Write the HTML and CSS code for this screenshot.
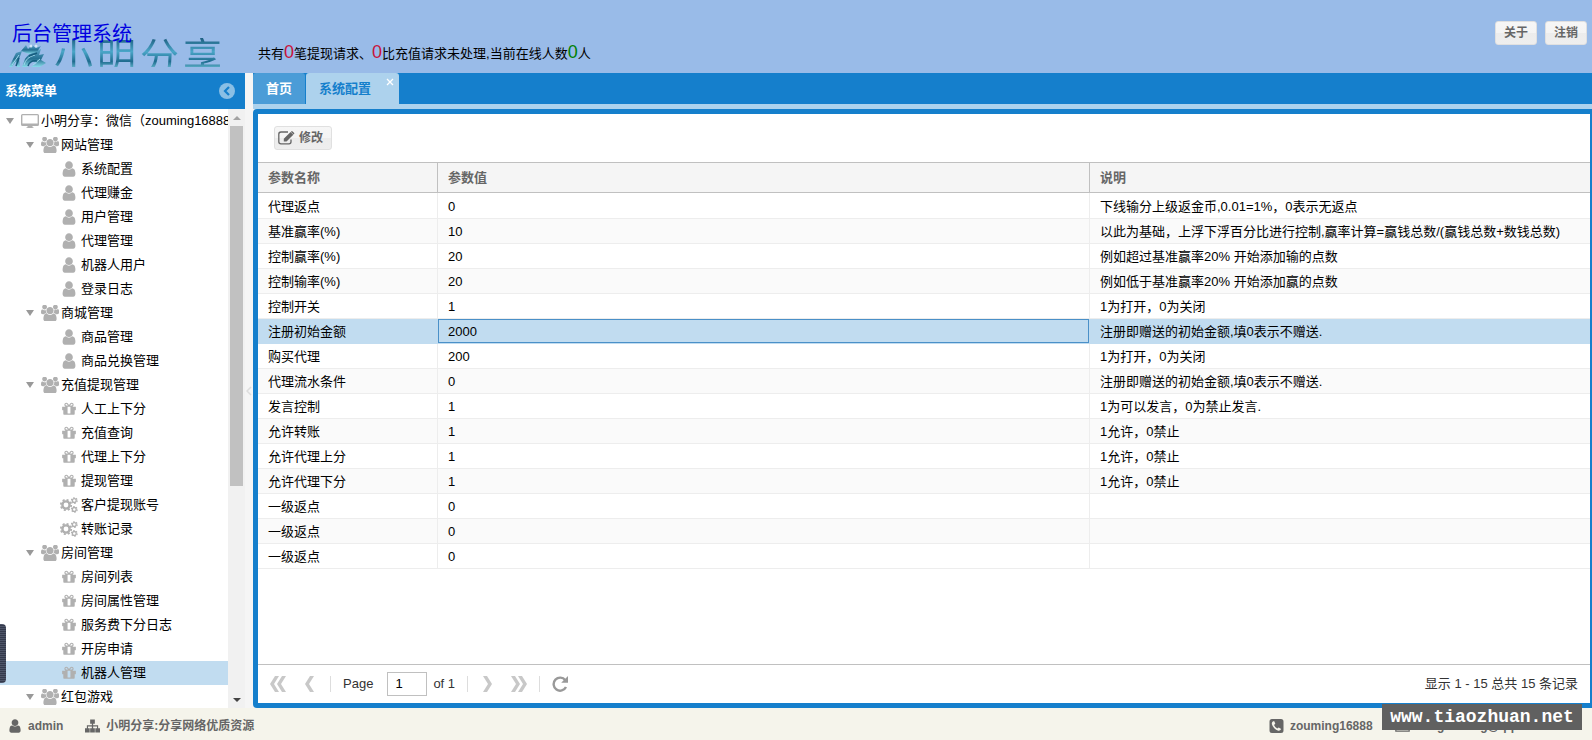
FILE: index.html
```html
<!DOCTYPE html>
<html lang="zh-CN">
<head>
<meta charset="utf-8">
<title>后台管理系统</title>
<link rel="stylesheet" href="styles.css">
</head>
<body>
<svg class="defs" aria-hidden="true">
  <symbol id="i-user" viewBox="96 96 1600 1600"><path d="M1536 1399q0 109-62.500 187t-150.500 78h-854q-88 0-150.500-78t-62.500-187q0-85 8.500-160.500t31.500-152 58.500-131 94-89 134.500-34.500q131 128 313 128t313-128q76 0 134.500 34.500t94 89 58.500 131 31.500 152 8.500 160.500zm-256-887q0 159-112.500 271.500t-271.500 112.500-271.500-112.500-112.500-271.500 112.500-271.500 271.500-112.500 271.500 112.500 112.500 271.500z"/></symbol>
  <symbol id="i-users" viewBox="0 64 1920 1664"><path d="M593 896q-162 5-265 128h-134q-82 0-138-40.500t-56-118.500q0-353 124-353 6 0 43.500 21t97.500 42.500 119 21.500q67 0 133-23-5 37-5 66 0 159 93 294zm1071 637q0 120-73 189.500t-194 69.500h-874q-121 0-194-69.500t-73-189.500q0-53 3.500-103.500t14-109 26.500-108.500 43-97.500 62-81 85.500-53.500 111.500-20q10 0 43 21.500t73 48 107 48 135 21.500 135-21.500 107-48 73-48 43-21.500q61 0 111.500 20t85.500 53.500 62 81 43 97.500 26.500 108.500 14 109 3.500 103.500zm-1024-1277q0 106-75 181t-181 75-181-75-75-181 75-181 181-75 181 75 75 181zm704 384q0 159-112.500 271.500t-271.500 112.500-271.500-112.500-112.500-271.500 112.500-271.500 271.500-112.500 271.500 112.500 112.500 271.500zm576 225q0 78-56 118.500t-138 40.500h-134q-103-123-265-128 93-135 93-294 0-29-5-66 66 23 133 23 59 0 119-21.500t97.500-42.500 43.500-21q124 0 124 353zm-128-609q0 106-75 181t-181 75-181-75-75-181 75-181 181-75 181 75 75 181z"/></symbol>
  <symbol id="i-gift" viewBox="0 0 1792 1792"><path d="M1056 1356v-716h-320v716q0 25 18 38.500t46 13.500h192q28 0 46-13.500t18-38.500zm-456-844h195l-126-161q-26-31-69-31-40 0-68 28t-28 68 28 68 68 28zm688-96q0-40-28-68t-68-28q-43 0-69 31l-125 161h194q40 0 68-28t28-68zm376 256v320q0 14-9 23t-23 9h-96v416q0 40-28 68t-68 28h-1088q-40 0-68-28t-28-68v-416h-96q-14 0-23-9t-9-23v-320q0-14 9-23t23-9h440q-93 0-158.500-65.500t-65.500-158.500 65.500-158.500 158.500-65.500q107 0 168 77l128 165 128-165q61-77 168-77 93 0 158.500 65.500t65.500 158.500-65.500 158.500-158.500 65.500h440q14 0 23 9t9 23z"/></symbol>
  <symbol id="i-cogs" viewBox="0 0 18 16"><g fill="none" stroke="currentColor"><circle cx="6" cy="8" r="3.600" stroke-width="2.400"/><circle cx="6" cy="8" r="5.200" stroke-width="1.800" stroke-dasharray="2.040 2.040"/><circle cx="14.300" cy="3.600" r="1.900" stroke-width="1.300"/><circle cx="14.300" cy="3.600" r="2.900" stroke-width="1.100" stroke-dasharray="1.520 1.520"/><circle cx="14.300" cy="12.400" r="1.900" stroke-width="1.300"/><circle cx="14.300" cy="12.400" r="2.900" stroke-width="1.100" stroke-dasharray="1.520 1.520"/></g></symbol>
  <symbol id="i-desktop" viewBox="0 0 18 16"><path fill-rule="evenodd" d="M1.500 1h15Q18 1 18 2.500v9q0 1.500-1.500 1.500H11.500v1.200h1V15h-7v-.8h1V13h-5Q0 13 0 11.500v-9Q0 1 1.500 1zM1.400 2.300v8.200h15.200V2.300z"/></symbol>
  <symbol id="i-sitemap" viewBox="0 0 16 14"><path d="M5.500 0h5v4.500H8.700v1.800H14v3.200h2V14h-5V9.500h1.800v-2H8.700v2h1.800V14h-5V9.500h1.800v-2H3.200v2H5V14H0V9.500h2V6.300h5.300V4.500H5.500z"/></symbol>
  <symbol id="i-phone" viewBox="0 0 14 14"><path fill-rule="evenodd" d="M2.500 0h9Q14 0 14 2.500v9q0 2.500-2.500 2.500h-9Q0 14 0 11.500v-9Q0 0 2.500 0zM3.600 2.300Q2 3.500 2.400 5.300q1.500 4.900 6.400 6.500 2 .2 2.900-1.700L9.200 8.400l-1.400 1.200Q5.500 8.500 4.500 6.100l1.300-1.300-1-2.600z"/></symbol>
  <symbol id="i-edit" viewBox="0 0 17 14"><path d="M13 8.500v2.300q0 2-2 2H3q-2.200 0-2.200-2V3.200Q.8 1 3 1h7" fill="none" stroke="currentColor" stroke-width="1.300"/><path d="M5.800 10.500V7.800L12.600 1l2.700 2.700-6.800 6.800zM13.300.4q.6-.6 1.300 0l1.400 1.400q.6.600 0 1.300l-.4.400L12.900.8z"/></symbol>
  <symbol id="i-prev" viewBox="0 0 9 16"><path d="M5 0h4L4 8l5 8H5L0 8z"/></symbol>
  <symbol id="i-next" viewBox="0 0 9 16"><path d="M0 0h4l5 8-5 8H0l5-8z"/></symbol>
  <symbol id="i-refresh" viewBox="0 0 16 16"><path d="M13.300 4.200A6.500 6.500 0 1 0 14 11" fill="none" stroke="currentColor" stroke-width="2.400"/><path d="M16 0v6.800H9.200z"/></symbol>
  <symbol id="i-mail" viewBox="0 0 18 14"><path d="M1 1h16v12H1zM1 3l8 6 8-6" fill="none" stroke="currentColor" stroke-width="1.500"/></symbol>
</svg>

<header class="header">
  <div class="brand">
    <svg class="emblem" viewBox="0 0 38 30" aria-hidden="true">
      <defs><linearGradient id="teal" x1="0" y1="0" x2="0" y2="1"><stop offset="0" stop-color="#5ba5ca"/><stop offset=".55" stop-color="#236f91"/><stop offset="1" stop-color="#89dceb"/></linearGradient></defs>
      <path fill="url(#teal)" d="M0 29 7 15l6-2-3 8 1 8H8l-1-6-4 6zM13 29l3-8q3-5 9-7l7-3-2 6 5-1-3 6 5 3-6 4H22l6-4-6-2-4 6z"/>
      <path fill="url(#teal)" d="m12 13 5-6 2 4 4-4 4 3 5-2-4 6-8 2z"/>
      <path fill="none" stroke="#9dd8ec" d="m3 27 7-10M15 27q2-8 11-10M24 27l7-6"/>
      <path fill="none" stroke="#165c7e" stroke-width="1.500" d="m7 28 3-8M19 28q2-6 9-5M28 15l-8 3"/>
      <circle cx="22" cy="8" r="1.500" fill="#d5e8f7"/><circle cx="27" cy="8" r="1.500" fill="#d5e8f7"/>
    </svg>
    <div class="wordmark"><span>小</span><span>明</span><span>分</span><span>享</span></div>
    <h1 class="title">后台管理系统</h1>
  </div>
  <p class="status">共有<b class="num red">0</b>笔提现请求、<b class="num red">0</b>比充值请求未处理,当前在线人数<b class="num green">0</b>人</p>
  <div class="actions"><button class="btn">关于</button><button class="btn">注销</button></div>
</header>

<div class="workspace">
  <aside class="sidebar">
    <div class="side-head"><h2>系统菜单</h2>
      <button class="collapse" aria-label="收起"><svg viewBox="0 0 16 16"><circle cx="8" cy="8" r="8" fill="#8abfe5"/><path d="M10 4 6 8l4 4" fill="none" stroke="#157fcc" stroke-width="2.200"/></svg></button></div>
    <div class="side-body">
      <ul class="tree">
        <li class="l0"><i class="caret"></i><svg><use href="#i-desktop"/></svg>小明分享：微信（zouming16888）</li>
        <li class="l1"><i class="caret"></i><svg><use href="#i-users"/></svg>网站管理</li>
        <li class="l2"><svg><use href="#i-user"/></svg>系统配置</li>
        <li class="l2"><svg><use href="#i-user"/></svg>代理赚金</li>
        <li class="l2"><svg><use href="#i-user"/></svg>用户管理</li>
        <li class="l2"><svg><use href="#i-user"/></svg>代理管理</li>
        <li class="l2"><svg><use href="#i-user"/></svg>机器人用户</li>
        <li class="l2"><svg><use href="#i-user"/></svg>登录日志</li>
        <li class="l1"><i class="caret"></i><svg><use href="#i-users"/></svg>商城管理</li>
        <li class="l2"><svg><use href="#i-user"/></svg>商品管理</li>
        <li class="l2"><svg><use href="#i-user"/></svg>商品兑换管理</li>
        <li class="l1"><i class="caret"></i><svg><use href="#i-users"/></svg>充值提现管理</li>
        <li class="l2"><svg><use href="#i-gift"/></svg>人工上下分</li>
        <li class="l2"><svg><use href="#i-gift"/></svg>充值查询</li>
        <li class="l2"><svg><use href="#i-gift"/></svg>代理上下分</li>
        <li class="l2"><svg><use href="#i-gift"/></svg>提现管理</li>
        <li class="l2"><svg><use href="#i-cogs"/></svg>客户提现账号</li>
        <li class="l2"><svg><use href="#i-cogs"/></svg>转账记录</li>
        <li class="l1"><i class="caret"></i><svg><use href="#i-users"/></svg>房间管理</li>
        <li class="l2"><svg><use href="#i-gift"/></svg>房间列表</li>
        <li class="l2"><svg><use href="#i-gift"/></svg>房间属性管理</li>
        <li class="l2"><svg><use href="#i-gift"/></svg>服务费下分日志</li>
        <li class="l2"><svg><use href="#i-gift"/></svg>开房申请</li>
        <li class="l2 selected"><svg><use href="#i-gift"/></svg>机器人管理</li>
        <li class="l1"><i class="caret"></i><svg><use href="#i-users"/></svg>红包游戏</li>
      </ul>
      <div class="scroll"><i class="up"></i><div class="track"><div class="thumb"></div></div><i class="down"></i></div>
    </div>
  </aside>
  <div class="splitter"><svg viewBox="0 0 6 10"><path d="M5 1 1 5l4 4" fill="none" stroke="#ddd" stroke-width="1.500"/></svg></div>
  <main class="main">
    <nav class="tabs"><button class="tab">首页</button><button class="tab active">系统配置<svg class="close" viewBox="0 0 8 8"><path d="m1 1 6 6M7 1 1 7" stroke="#fff" stroke-width="1.300"/></svg></button></nav>
    <section class="panel">
      <div class="toolbar"><button class="btn edit"><svg><use href="#i-edit"/></svg>修改</button></div>
      <div class="grid">
        <table>
          <colgroup><col class="c1"><col class="c2"><col></colgroup>
          <thead><tr><th>参数名称</th><th>参数值</th><th>说明</th></tr></thead>
          <tbody>
            <tr><td>代理返点</td><td>0</td><td>下线输分上级返金币,0.01=1%，0表示无返点</td></tr>
            <tr><td>基准赢率(%)</td><td>10</td><td>以此为基础，上浮下浮百分比进行控制,赢率计算=赢钱总数/(赢钱总数+数钱总数)</td></tr>
            <tr><td>控制赢率(%)</td><td>20</td><td>例如超过基准赢率20% 开始添加输的点数</td></tr>
            <tr><td>控制输率(%)</td><td>20</td><td>例如低于基准赢率20% 开始添加赢的点数</td></tr>
            <tr><td>控制开关</td><td>1</td><td>1为打开，0为关闭</td></tr>
            <tr class="selected"><td>注册初始金额</td><td class="focus">2000</td><td>注册即赠送的初始金额,填0表示不赠送.</td></tr>
            <tr><td>购买代理</td><td>200</td><td>1为打开，0为关闭</td></tr>
            <tr><td>代理流水条件</td><td>0</td><td>注册即赠送的初始金额,填0表示不赠送.</td></tr>
            <tr><td>发言控制</td><td>1</td><td>1为可以发言，0为禁止发言.</td></tr>
            <tr><td>允许转账</td><td>1</td><td>1允许，0禁止</td></tr>
            <tr><td>允许代理上分</td><td>1</td><td>1允许，0禁止</td></tr>
            <tr><td>允许代理下分</td><td>1</td><td>1允许，0禁止</td></tr>
            <tr><td>一级返点</td><td>0</td><td></td></tr>
            <tr><td>一级返点</td><td>0</td><td></td></tr>
            <tr><td>一级返点</td><td>0</td><td></td></tr>
          </tbody>
        </table>
      </div>
      <div class="pager">
        <button class="nav double" aria-label="首页"><svg><use href="#i-prev"/></svg><svg><use href="#i-prev"/></svg></button>
        <button class="nav" aria-label="上一页"><svg><use href="#i-prev"/></svg></button>
        <i class="sep"></i>
        <label for="page">Page</label><input id="page" type="text" value="1"><span>of 1</span>
        <i class="sep"></i>
        <button class="nav" aria-label="下一页"><svg><use href="#i-next"/></svg></button>
        <button class="nav double" aria-label="末页"><svg><use href="#i-next"/></svg><svg><use href="#i-next"/></svg></button>
        <i class="sep"></i>
        <button class="nav refresh" aria-label="刷新"><svg><use href="#i-refresh"/></svg></button>
        <span class="summary">显示 1 - 15 总共 15 条记录</span>
      </div>
    </section>
  </main>
</div>

<footer class="footer">
  <span class="item"><svg class="person"><use href="#i-user"/></svg>admin</span>
  <span class="item"><svg><use href="#i-sitemap"/></svg>小明分享:分享网络优质资源</span>
  <span class="item phone"><svg><use href="#i-phone"/></svg>zouming16888</span>
  <span class="item mail"><svg><use href="#i-mail"/></svg>mingouming@qq</span>
  <div class="watermark">www.tiaozhuan.net</div>
</footer>
<div class="dock"></div>
</body>
</html>
```
FILE: styles.css
```css
* { box-sizing: border-box; }
body {
  margin: 0;
  height: 100vh;
  display: flex;
  flex-direction: column;
  overflow: hidden;
  position: relative;
  background: #f5f5f5;
  color: #000;
  font: 13px/24px "Liberation Sans", "Noto Sans CJK SC", sans-serif;
}
h1, h2, p, ul { margin: 0; padding: 0; font-weight: normal; list-style: none; }
button { font: inherit; padding: 0; border: 0; background: none; color: inherit; }
svg { fill: currentColor; flex: none; display: block; }
.defs { position: absolute; width: 0; height: 0; }

/* header */
.header {
  flex: none;
  height: 73px;
  display: flex;
  align-items: flex-start;
  background: #99bbe8;
  padding-right: 5px;
}
.brand { position: relative; width: 258px; height: 67px; overflow: hidden; }
.emblem { position: absolute; left: 9px; top: 38px; width: 38px; height: 30px; }
.wordmark {
  position: absolute;
  left: 54px;
  top: 38px;
  display: grid;
  grid-template-columns: repeat(4, 43px);
  font-size: 39px;
  line-height: 39px;
  color: transparent;
  background: linear-gradient(#1d5e80, #4aa6c8 35%, #1f6c8f 60%, #7fd6e8 85%, #236f91);
  background-clip: text;
  -webkit-background-clip: text;
}
.title { position: absolute; left: 12px; top: 22px; font-size: 20px; line-height: 24px; color: #0000e0; }
.status { padding-top: 40px; white-space: nowrap; }
.num { font-size: 18px; line-height: 24px; font-weight: normal; }
.red { color: #c8143c; }
.green { color: #008000; }
.actions { margin-left: auto; padding-top: 21px; display: flex; gap: 8px; }
.btn {
  height: 24px;
  padding: 0 8px;
  border: 1px solid #e0e0e0;
  border-radius: 3px;
  background: linear-gradient(#f6f6f6, #f4f4f4 50%, #ececec 50%, #eee);
  color: #666;
  font-size: 12px;
  font-weight: bold;
  line-height: 22px;
}

/* workspace */
.workspace { flex: 1; min-height: 0; display: flex; }
.sidebar { width: 245px; flex: none; display: flex; flex-direction: column; background: #fff; }
.side-head {
  height: 36px;
  flex: none;
  display: flex;
  align-items: center;
  justify-content: space-between;
  padding: 0 10px 0 5px;
  background: #157fcc;
  color: #fff;
}
.side-head h2 { font-size: 13px; font-weight: bold; }
.collapse svg { width: 16px; height: 16px; }
.side-body { flex: 1; min-height: 0; display: flex; }
.tree { flex: 1; min-width: 0; overflow: hidden; }
.tree li { display: flex; align-items: center; height: 24px; line-height: 26px; white-space: nowrap; }
.tree svg { width: 18px; height: 16px; margin-right: 2px; color: #b0b0b0; }
.l0 { padding-left: 6px; }
.l1 { padding-left: 26px; }
.tree .l2 { padding-left: 60px; }
.l2 svg { margin-right: 3px; }
.caret {
  flex: none;
  margin-right: 6px;
  border: 4px solid transparent;
  border-top: 6px solid #999;
  border-bottom: 0;
}
.tree .caret + svg { margin-left: 1px; }
.selected { background: #c1dcf0; }
.scroll {
  width: 17px;
  display: flex;
  flex-direction: column;
  align-items: center;
  padding: 7px 0 6px;
  background: #f1f1f1;
}
.up { border: 4px solid transparent; border-top: 0; border-bottom-color: #a3a3a3; }
.down { border: 4px solid transparent; border-bottom: 0; border-top-color: #444; }
.track { flex: 1; width: 13px; padding-top: 6px; }
.thumb { height: 63%; background: #c1c1c1; }
.splitter { width: 8px; flex: none; display: flex; align-items: center; justify-content: center; }
.splitter svg { width: 6px; height: 10px; }

/* tabs */
.main { flex: 1; min-width: 0; display: flex; flex-direction: column; }
.tabs {
  height: 36px;
  flex: none;
  display: flex;
  gap: 1px;
  background: #157fcc;
  border-bottom: 5px solid #add2ed;
}
.tab {
  position: relative;
  padding: 0 13px;
  border-radius: 3px 3px 0 0;
  background: #4b9cd7;
  color: #fff;
  font-weight: bold;
}
.tab.active { padding-right: 28px; background: #add2ed; color: #157fcc; }
.close { position: absolute; right: 5px; top: 5px; width: 8px; height: 8px; }

/* panel */
.panel {
  flex: 1;
  min-height: 0;
  display: flex;
  flex-direction: column;
  border: 5px solid #157fcc;
  border-right-width: 2px;
  border-radius: 4px 0 0 4px;
  background: #fff;
}
.toolbar { height: 48px; flex: none; display: flex; align-items: center; padding-left: 16px; }
.edit { display: flex; align-items: center; gap: 4px; padding: 0 8px 0 3px; }
.edit svg { width: 17px; height: 14px; }
.grid { flex: 1; min-height: 0; overflow: hidden; }
table { width: 100%; table-layout: fixed; border-collapse: separate; border-spacing: 0; }
.c1 { width: 180px; }
.c2 { width: 652px; }
th, td { padding: 0 10px; text-align: left; white-space: nowrap; }
th {
  height: 31px;
  line-height: 29px;
  border: solid #c0c0c0;
  border-width: 1px 1px 1px 0;
  background: #f5f5f5;
  color: #666;
}
td { height: 25px; padding-top: 2px; line-height: 22px; border: solid #ededed; border-width: 0 1px 1px 0; }
tbody tr:first-child td { height: 26px; padding-top: 3px; }
th:last-child, td:last-child { border-right: 0; }
tbody tr:nth-child(even) { background: #fafafa; }
tbody tr.selected { background: #c1dcf0; }
tr.selected td { border-color: #c1dcf0; }
td.focus { box-shadow: inset 0 0 0 1px #4a90c8; }

/* pager */
.pager {
  height: 39px;
  flex: none;
  display: flex;
  align-items: center;
  padding: 0 12px;
  border-top: 1px solid #c0c0c0;
  color: #333;
}
.nav { display: flex; margin-right: 16px; color: #c8c8c8; }
.nav + .nav { margin-left: 3px; }
.nav svg { width: 9px; height: 16px; }
.nav.double svg + svg { margin-left: -2px; }
.nav.double + .sep { margin-left: -4px; }
.nav.refresh { color: #999; margin-left: 12px; }
.nav.refresh svg { width: 16px; height: 16px; }
.sep { width: 1px; height: 16px; background: #ddd; }
.pager label { margin-left: 12px; }
.pager input {
  width: 40px;
  height: 24px;
  margin: 0 6px 0 14px;
  padding: 0 7px;
  border: 1px solid #c0c0c0;
  font: inherit;
  color: #000;
}
.pager span + .sep { margin: 0 15px 0 12px; }
.summary { margin-left: auto; }

/* footer */
.footer {
  position: relative;
  flex: none;
  height: 32px;
  display: flex;
  align-items: center;
  gap: 22px;
  padding: 4px 78px 0 8px;
  background: #f5f4eb;
  color: #666;
  font-size: 12px;
  font-weight: bold;
}
.item { display: flex; align-items: center; gap: 6px; white-space: nowrap; }
.item svg { width: 15px; height: 14px; }
.item .person { width: 14px; height: 16px; }
.phone { margin-left: auto; }
.watermark {
  position: absolute;
  right: 10px;
  top: -4px;
  width: 200px;
  height: 26px;
  background: #606060;
  color: #fff;
  text-align: center;
  font: bold 18px/26px "Liberation Mono", monospace;
}
.dock {
  position: absolute;
  left: 0;
  bottom: 57px;
  width: 6px;
  height: 59px;
  border-radius: 0 4px 4px 0;
  background: repeating-linear-gradient(#4d5468 0 1px, #343a4c 1px 2px);
}
```
